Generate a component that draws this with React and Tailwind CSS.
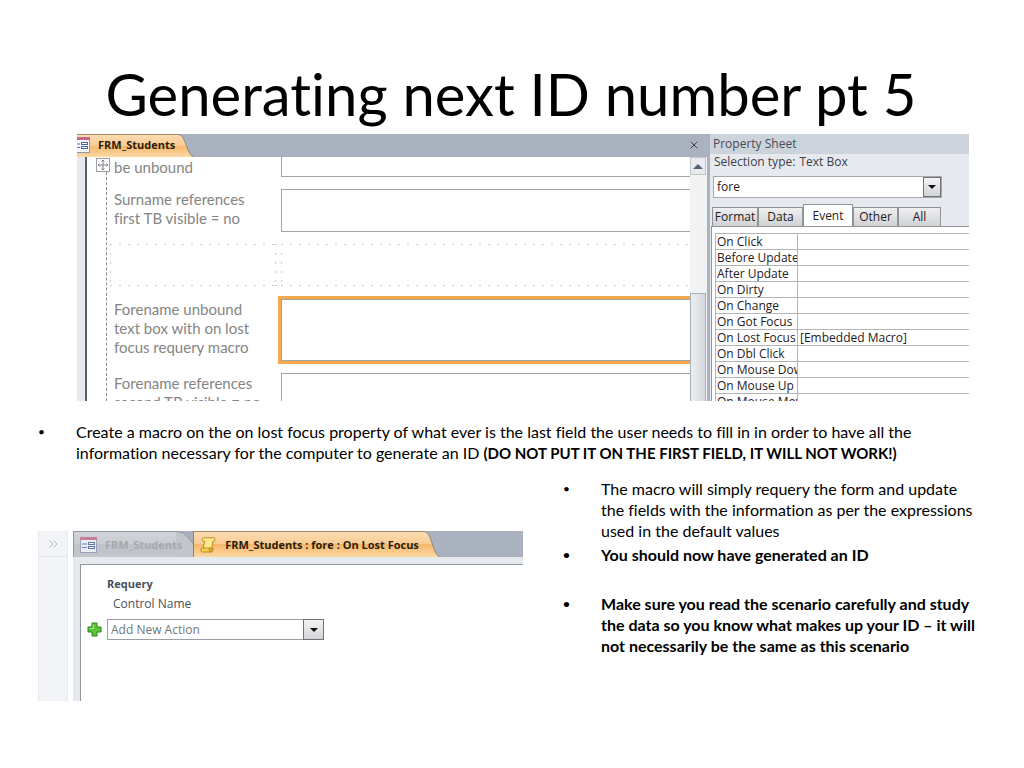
import { useState } from "react";
import { X } from "lucide-react";

const eventRows = [
  ["On Click", ""],
  ["Before Update", ""],
  ["After Update", ""],
  ["On Dirty", ""],
  ["On Change", ""],
  ["On Got Focus", ""],
  ["On Lost Focus", "[Embedded Macro]"],
  ["On Dbl Click", ""],
  ["On Mouse Down", ""],
  ["On Mouse Up", ""],
  ["On Mouse Move", ""],
];

const sheetTabs = [
  { name: "Format", width: "w-[46px]" },
  { name: "Data", width: "w-[45px]" },
  { name: "Event", width: "w-[50px]" },
  { name: "Other", width: "w-[45px]" },
  { name: "All", width: "w-[43px]" },
];

function FormIcon({ className }) {
  return (
    <svg viewBox="0 0 17 16" className={className} aria-hidden="true">
      <rect x="0.5" y="0.5" width="16" height="15" fill="#f4f6fb" stroke="#8e97b8" />
      <rect x="0" y="0" width="17" height="3" fill="#c4698c" />
      <path d="M2 7h5M2 10.5h5" stroke="#5c6fa8" strokeWidth="1" />
      <rect x="8.5" y="5.5" width="6" height="2" fill="#fff" stroke="#4c63a6" />
      <rect x="8.5" y="9.5" width="6" height="2" fill="#fff" stroke="#4c63a6" />
    </svg>
  );
}

function MacroIcon() {
  return (
    <svg viewBox="0 0 16 16" className="h-4 w-4 shrink-0" aria-hidden="true">
      <path
        d="M3.500 .8h10.300c1.800 .2 1.700 3 .2 3.200h-1l-1.300 8H3L4.700 4H3C1.500 3.500 1.700 1.200 3.500 .8z"
        fill="#fde88c"
        stroke="#b98a24"
      />
      <path d="M1.700 11h8c-.8 1.500-.2 4 1.200 4H2.500C.5 15 .3 12 1.700 11z" fill="#f6cd50" stroke="#b98a24" />
      <path d="M10.900 15c1.800 0 2.600-1.500 1.800-4H9.700c-.8 1.500-.2 4 1.200 4z" fill="#dba832" stroke="#b98a24" />
    </svg>
  );
}

function PlusIcon() {
  return (
    <svg viewBox="0 0 15 15" className="h-[15px] w-[15px]" aria-hidden="true">
      <path
        d="M5 1h5v4h4v5h-4v4H5v-4H1V5h4z"
        fill="#5cc33a"
        stroke="#26851b"
        strokeLinejoin="round"
      />
      <path d="M6.500 2.500v4h-4" fill="none" stroke="#a5e88a" />
    </svg>
  );
}

function MoveHandle() {
  return (
    <svg viewBox="0 0 14 14" className="h-[14px] w-[14px] bg-white" aria-hidden="true">
      <rect x="0.5" y="0.5" width="13" height="13" fill="#fff" stroke="#9a9da3" />
      <path d="M7 2v10M2 7h10" stroke="#7b8089" />
      <path
        d="M5.500 3.500L7 2l1.500 1.500M5.500 10.500L7 12l1.500-1.500M3.500 5.500L2 7l1.500 1.500M10.500 5.500L12 7l-1.500 1.500"
        fill="none"
        stroke="#7b8089"
      />
    </svg>
  );
}

function DropArrow({ className }) {
  return (
    <span
      className={`pointer-events-none absolute flex items-center justify-center border border-[#6f7378] bg-linear-to-b from-[#f4f4f4] to-[#d2d3d5] ${className}`}
    >
      <svg viewBox="0 0 8 4" className="h-1 w-2" aria-hidden="true">
        <path d="M0 0h8L4 4z" fill="#111" />
      </svg>
    </span>
  );
}

// slanted right edge of a document tab
function TabTail({ id, colors, edge }) {
  return (
    <svg viewBox="0 0 18 26" preserveAspectRatio="none" className="h-full w-[18px] shrink-0" aria-hidden="true">
      <defs>
        <linearGradient id={id} x1="0" y1="0" x2="0" y2="1">
          <stop offset="0" stopColor={colors[0]} />
          <stop offset="0.5" stopColor={colors[1]} />
          <stop offset="0.5" stopColor={colors[2]} />
          <stop offset="1" stopColor={colors[3]} />
        </linearGradient>
      </defs>
      <path d="M0 .5C5 .5 6 4 8 9C11 17 12 24 17 26H0z" fill={`url(#${id})`} />
      <path d="M0 .5C5 .5 6 4 8 9C11 17 12 24 17 26" fill="none" stroke={edge} />
    </svg>
  );
}

// the tab behind the active one is cut short, only its rounded corner shows
function CutTail() {
  return (
    <svg viewBox="0 0 18 26" className="h-[26px] w-[18px] shrink-0" aria-hidden="true">
      <path d="M0 0h18v26H0z" fill="#a9b2be" />
      <path d="M0 .5C8 .5 10 4 17.500 13V26H0z" fill="#c3c6cb" />
      <path d="M0 .5C8 .5 10 4 17.500 13" fill="none" stroke="#8f959e" />
      <path d="M17.500 0v26" stroke="#8a8478" />
    </svg>
  );
}

const orange = ["#fbdcb2", "#f9cb92", "#f5b76b", "#fcd9a4"];
const orangeFill =
  "bg-[linear-gradient(#fbdcb2,#f9cb92_50%,#f5b76b_50%,#fcd9a4)] border-t border-[#a58863]";
const greyFill =
  "bg-[linear-gradient(#d0d3d8,#c9ccd1_50%,#bfc2c8_50%,#c3c6cb)] border-t border-[#8f959e]";

function FormRow({ id, lines, className, fieldClass }) {
  return (
    <div className={`flex items-start ${className}`}>
      <label
        htmlFor={id}
        className="w-[167px] shrink-0 pt-px font-['Lato','Carlito',sans-serif] text-[15px] leading-[19px] text-[#858585]"
      >
        {lines.map((line) => (
          <span key={line} className="block whitespace-nowrap">
            {line}
          </span>
        ))}
      </label>
      <textarea
        id={id}
        className={`block min-w-0 flex-1 resize-none border border-r-0 border-[#a0a2a5] bg-white outline-none ${fieldClass}`}
      />
    </div>
  );
}

function EmptyCell({ className }) {
  return (
    <div className={className}>
      <svg className="block h-full w-full" aria-hidden="true">
        <g stroke="#cfcabb" strokeDasharray="2 7">
          <line x1="0" y1="0.5" x2="100%" y2="0.5" />
          <line x1="0" y1="41.5" x2="100%" y2="41.5" />
          <line x1="0.5" y1="9" x2="0.5" y2="42" />
        </g>
      </svg>
    </div>
  );
}

function StudentForm() {
  return (
    <div className="flex min-w-0 flex-1 flex-col">
      <div className="flex h-[23px] shrink-0 items-stretch bg-[#a9b2be]">
        <div className={`flex items-center overflow-hidden pr-[2px] pb-[2px] ${orangeFill}`}>
          <FormIcon className="-ml-1 h-4 w-[17px] shrink-0" />
          <span className="ml-2 text-[11px] leading-4 font-bold whitespace-nowrap text-[#2b1c08]">
            FRM_Students
          </span>
        </div>
        <TabTail id="tail-form" colors={orange} edge="#8b8577" />
        <button type="button" aria-label="Close" className="mr-[7px] ml-auto pb-[2px]">
          <X className="h-3 w-3 text-[#3c4148]" strokeWidth={2} />
        </button>
      </div>

      <div className="flex min-h-0 flex-1">
        <div className="w-[10px] shrink-0 border-r-2 border-[#566069] bg-[#e6e9ed]" />
        <div className="relative min-w-0 flex-1 overflow-hidden bg-white pl-[27px]">
          <div className="absolute top-[15px] bottom-0 left-[19px] border-l border-dashed border-[#8b8b8b]" />
          <div className="absolute top-px left-[9px]">
            <MoveHandle />
          </div>
          <FormRow id="surname-unbound" lines={["be unbound"]} className="h-[20px]" fieldClass="h-[20px] border-t-0" />
          <FormRow
            id="surname-ref"
            lines={["Surname references", "first TB visible = no"]}
            className="mt-3"
            fieldClass="h-[43px]"
          />
          {/* empty layout cells */}
          <div className="mt-3 -ml-1 flex h-[43px]">
            <EmptyCell className="w-[165px]" />
            <EmptyCell className="w-[6px]" />
            <EmptyCell className="flex-1" />
          </div>
          <FormRow
            id="forename-unbound"
            lines={["Forename unbound", "text box with on lost", "focus requery macro"]}
            className="mt-3"
            fieldClass="h-[62px] outline-3 outline-solid outline-[#f5a94c]"
          />
          <FormRow
            id="forename-ref"
            lines={["Forename references", "second TB visible = no"]}
            className="mt-3"
            fieldClass="h-[43px]"
          />
        </div>
        <div className="flex w-[17px] shrink-0 flex-col bg-[#f1f2f4]">
          <div className="flex h-[18px] w-4 items-center justify-center border border-[#c3c7cd] bg-[#e9ebee]">
            <svg viewBox="0 0 10 5" className="h-[5px] w-[10px]" aria-hidden="true">
              <path d="M0 5L5 0l5 5z" fill="#50617a" />
            </svg>
          </div>
          <div className="mt-[118px] w-4 flex-1 border border-b-0 border-[#aab0b8] bg-linear-to-r from-[#eceef1] to-[#d4d8de]" />
        </div>
      </div>
    </div>
  );
}

function PropertySheet() {
  const [tab, setTab] = useState("Event");

  return (
    <div className="flex w-[262px] shrink-0 flex-col border-l-3 border-[#a9b2be] bg-[#e6e9ee] text-xs text-[#1f2022]">
      <div className="h-5 shrink-0 bg-[#cdd3db] pl-[3px] leading-5 text-[#444c57]">Property Sheet</div>
      <div className="pl-1 leading-4 text-[#3c4148]">
        Selection type: <span className="ml-px">Text Box</span>
      </div>
      <div className="relative mt-[6px] ml-[3px] w-[229px]">
        <select
          aria-label="Selected control"
          className="block h-[22px] w-full appearance-none border border-[#a5a9af] bg-white pl-[3px] outline-none"
        >
          <option>fore</option>
        </select>
        <DropArrow className="top-px right-px h-5 w-[18px]" />
      </div>

      <div className="mt-[6px] flex h-[22px] shrink-0 items-end pl-[2px]">
        {sheetTabs.map(({ name, width }) => (
          <button
            key={name}
            type="button"
            onClick={() => setTab(name)}
            className={`border border-b-0 border-[#8f949b] leading-4 whitespace-nowrap ${width} ${
              tab === name ? "h-[22px] bg-white" : "h-[19px] bg-linear-to-b from-[#f0f0f1] to-[#cfd1d3]"
            }`}
          >
            {name}
          </button>
        ))}
      </div>

      <div className="ml-px min-h-0 flex-1 overflow-hidden border-t border-l border-[#8f949b] bg-white pt-[6px] pl-[3px]">
        <table className="w-full table-fixed border-collapse border-t border-l border-[#b3b3b3] leading-[15px]">
          <tbody>
            {eventRows.map(([name, value]) => (
              <tr key={name} className="h-4 border-b border-[#b3b3b3]">
                <th
                  scope="row"
                  className="w-[82px] overflow-hidden border-r border-[#b3b3b3] p-0 pl-px text-left font-normal whitespace-nowrap"
                >
                  {name}
                </th>
                <td className="p-0 pl-[2px] whitespace-nowrap">{value}</td>
              </tr>
            ))}
          </tbody>
        </table>
      </div>
    </div>
  );
}

function MacroDesigner() {
  return (
    <div className="flex h-[170px] overflow-hidden font-['Open_Sans',sans-serif]">
      <div className="w-[30px] shrink-0 border-x border-[#e8eaed] bg-[#f3f4f7]">
        <div className="flex h-[26px] items-center justify-center border-b border-[#e1e4e8] text-[#b5b9c0]">
          <svg viewBox="0 0 9 8" className="h-2 w-[9px]" aria-hidden="true">
            <path d="M.5 .5L4 4 .5 7.500M4.500 .5L8 4 4.500 7.500" fill="none" stroke="currentColor" />
          </svg>
        </div>
      </div>
      <div className="ml-[5px] flex min-w-0 flex-1 flex-col bg-[#e6eaef]">
        <div className="flex h-[26px] shrink-0 bg-[#a9b2be]">
          <div className={`flex items-center border-l border-l-[#8f959e] pl-[6px] ${greyFill}`}>
            <FormIcon className="h-4 w-[17px] shrink-0 opacity-80" />
            <span className="relative z-10 -mr-[6px] ml-2 text-[11px] leading-4 font-bold whitespace-nowrap text-[#a6aab0]">
              FRM_Students
            </span>
          </div>
          <CutTail />
          <div className={`flex items-center pr-1 pl-[6px] ${orangeFill}`}>
            <MacroIcon />
            <span className="ml-[9px] text-[11px] leading-4 font-bold whitespace-nowrap text-[#2b1c08]">
              FRM_Students : fore : On Lost Focus
            </span>
          </div>
          <TabTail id="tail-macro" colors={orange} edge="#8b8577" />
        </div>

        <div className="mt-[7px] ml-[7px] flex-1 border-t border-l border-[#8f969f] bg-white pt-[11px] text-xs leading-4">
          <h2 className="pl-[26px] text-[11px] leading-4 font-bold text-[#4b5158]">Requery</h2>
          <p className="mt-1 pl-8 text-[#4b5158]">Control Name</p>
          <div className="mt-[7px] flex items-center pl-[6px]">
            <button type="button" aria-label="Add action">
              <PlusIcon />
            </button>
            <div className="relative ml-[5px] w-[217px]">
              <select
                aria-label="Add New Action"
                className="block h-[21px] w-full appearance-none border border-[#9b9fa4] bg-white pl-[3px] text-[#73777c] outline-none"
              >
                <option>Add New Action</option>
              </select>
              <DropArrow className="top-0 right-0 h-[21px] w-[21px]" />
            </div>
          </div>
        </div>
      </div>
    </div>
  );
}

function Bullet({ className = "", children }) {
  return (
    <li className={`flex ${className}`}>
      <span className="w-[38px] shrink-0 text-xs leading-[21px]">•</span>
      <span className="min-w-0 flex-1">{children}</span>
    </li>
  );
}

export default function App() {
  return (
    <main className="min-h-screen bg-white pt-[62px] pr-11 pb-10 pl-[38px] font-['Lato','Carlito',sans-serif] text-base leading-[21px] text-black [font-variant-ligatures:none]">
      <h1 className="pl-1 text-center text-[58px] leading-[64px]">Generating next ID number pt 5</h1>

      <div className="mt-2 mr-[11px] ml-[39px] flex h-[267px] overflow-hidden font-['Open_Sans',sans-serif]">
        <StudentForm />
        <PropertySheet />
      </div>

      <ul className="mt-5">
        <Bullet className="pr-4">
          Create a macro on the on lost focus property of what ever is the last field the user needs to fill in in order
          to have all the information necessary for the computer to generate an ID{" "}
          <strong className="text-[15px]">(DO NOT PUT IT ON THE FIRST FIELD, IT WILL NOT WORK!)</strong>
        </Bullet>
      </ul>

      <div className="mt-[14px] grid grid-cols-[485fr_417fr] gap-10">
        <div className="pt-[53px]">
          <MacroDesigner />
        </div>
        <ul>
          <Bullet>
            The macro will simply requery the form and update the fields with the information as per the expressions
            used in the default values
          </Bullet>
          <Bullet className="mt-[3px] font-bold">You should now have generated an ID</Bullet>
          <Bullet className="mt-7 font-bold">
            Make sure you read the scenario carefully and study the data so you know what makes up your ID – it will not
            necessarily be the same as this scenario
          </Bullet>
        </ul>
      </div>
    </main>
  );
}
